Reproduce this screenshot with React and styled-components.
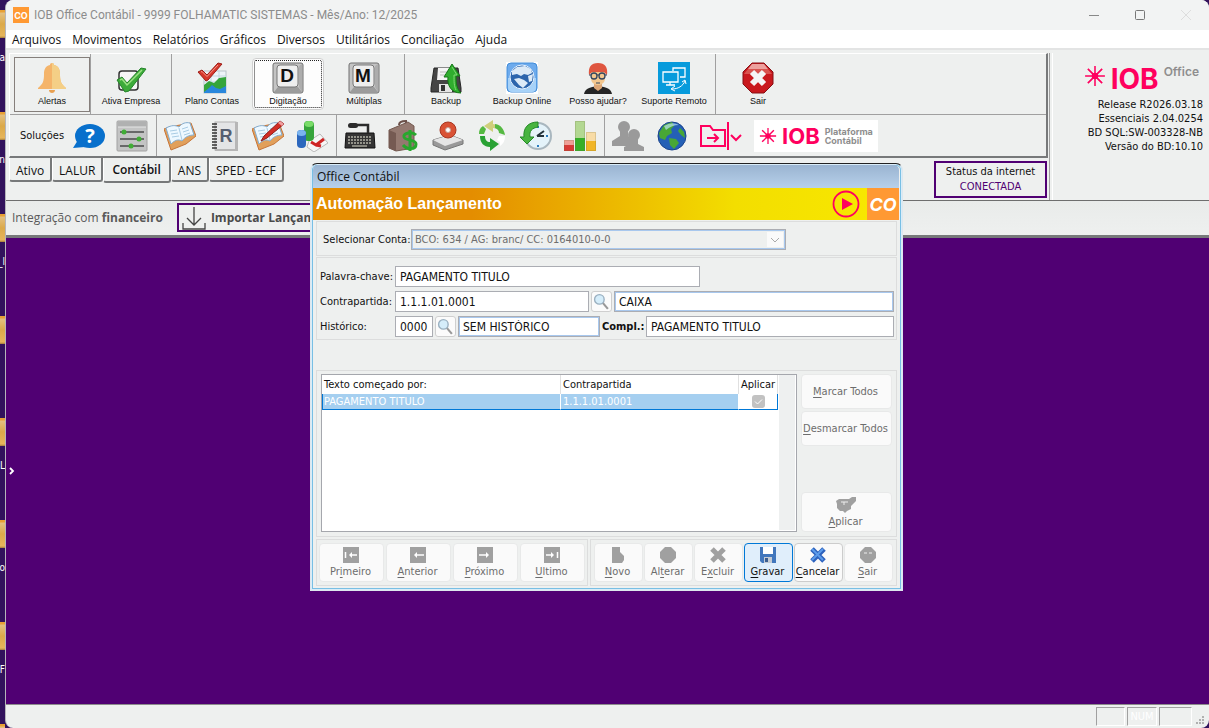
import React from 'react';
import styled, { createGlobalStyle } from 'styled-components';

const GlobalStyle = createGlobalStyle`
  * {
    box-sizing: border-box;
  }

  body {
    margin: 0;
    background: #32125c;
    font-family: 'DejaVu Sans Condensed', 'DejaVu Sans', sans-serif;
    font-size: 11px;
    color: #111;
  }

  button, input, select {
    font: inherit;
    color: inherit;
    margin: 0;
  }

  svg {
    display: block;
    flex: none;
  }
`;

// Desktop behind the window
const Desktop = styled.div`
  display: grid;
  grid-template-columns: 5px minmax(0, 1fr);
  height: 100vh;
  overflow: hidden;
`;

const DesktopIcons = styled.div`
  padding-top: 10px;
  overflow: hidden;
`;

const DesktopIcon = styled.div`
  height: 102px;
  color: white;

  &::before {
    content: '';
    display: block;
    height: 28px;
    background: linear-gradient(#e8a035 2px, #e3bf80 3px, #dba94a 14px, #e6b55c 26px, #a37a3c);
  }
`;

const DesktopLabel = styled.div`
  display: flex;
  justify-content: flex-end;
  margin-top: 13px;
  font-size: 10px;
  line-height: 14px;
`;

const Window = styled.div`
  position: relative;
  display: flex;
  flex-direction: column;
  min-height: 0;
  background: #eef0ef;
  border-left: 1px solid #b5b5ba;
  border-radius: 8px;
  overflow: hidden;
`;

const TitleBar = styled.header`
  display: flex;
  align-items: center;
  gap: 5px;
  height: 30px;
  flex: none;
  padding: 0 15px 0 7px;
  background: #f2f3f3;
  color: #8c8c8c;
  font-family: Roboto, sans-serif;
  font-size: 12px;
`;

const CoBadge = styled.span`
  display: flex;
  align-items: center;
  justify-content: center;
  width: ${(p) => p.$size}px;
  height: ${(p) => p.$size}px;
  background: #ff9933;
  color: white;
  font-family: Inter, sans-serif;
  font-weight: 700;
  font-style: ${(p) => (p.$italic ? 'italic' : 'normal')};
  font-size: ${(p) => p.$font}px;
`;

const WindowButtons = styled.div`
  display: flex;
  gap: 30px;
  margin-left: auto;
`;

const WindowButton = styled.button`
  padding: 0;
  border: none;
  background: none;
  width: 16px;
  height: 16px;
`;

const MenuBar = styled.nav`
  display: flex;
  align-items: center;
  gap: 11px;
  height: 20px;
  flex: none;
  padding: 1px 6px 0;
  background: white;
  border-bottom: 2px solid #e3e4e4;
`;

const MenuItem = styled.a`
  color: #111;
  text-decoration: none;
  font-family: 'Open Sans', sans-serif;
  font-size: 12px;
  line-height: 16px;
`;

const TopArea = styled.div`
  display: grid;
  grid-template-columns: minmax(0, 1fr) 159px;
  height: 151px;
  flex: none;
  padding-top: 3px;
  border-bottom: 1px solid #6e6e6e;
`;

const Toolbars = styled.div`
  display: flex;
  flex-direction: column;
  padding: 0 1px 0 3px;
  border-right: 1px solid #a0a0a0;
`;

const ToolFrame = styled.div`
  border-top: 1px solid white;
  border-left: 1px solid white;
  border-right: 2px solid #77797a;
  border-bottom: 2px solid #77797a;
`;

const ToolRow = styled.div`
  display: flex;
  height: 61px;
  border-bottom: 1px solid #a0a0a0;
`;

const ToolGroup = styled.div`
  display: flex;
  align-items: center;
  padding: 0 ${(p) => (p.$flush ? 0 : p.$pad || 2)}px 0 ${(p) => p.$pad || 2}px;
  border-right: 1px solid ${(p) => (p.$last ? 'transparent' : '#a0a0a0')};
`;

const ToolButton = styled.button`
  display: flex;
  flex-direction: column;
  align-items: center;
  justify-content: flex-end;
  gap: 1px;
  width: 76px;
  height: 55px;
  padding: 0 0 4px;
  border: 1px solid ${(p) => (p.$framed ? '#857f7b' : 'transparent')};
  background: none;
  font-family: 'Liberation Sans', sans-serif;
  font-size: 9px;
  line-height: 12px;
  white-space: nowrap;
`;

const FocusedToolButton = styled(ToolButton)`
  width: 72px;
  height: 52px;
  margin: 0 2px;
  border: 1px solid #d0d0d0;
  border-radius: 4px;
  background: #fdfdfd;
  outline: 1px dotted #222;
  outline-offset: -3px;
  padding-bottom: 2px;
`;

const IconRow = styled.div`
  display: flex;
  align-items: center;
  height: 41px;
`;

const IconGroup = styled.div`
  display: flex;
  align-items: center;
  gap: ${(p) => p.$gap || 12}px;
  height: 100%;
  padding: 0 8px 0 7px;
  border-right: 1px solid ${(p) => (p.$last ? 'transparent' : '#a0a0a0')};
`;

const SolutionsLabel = styled.span`
  width: 42px;
  margin-left: 3px;
`;

const IconButton = styled.button`
  display: flex;
  padding: 0;
  border: none;
  background: none;
`;

const PlatformLogo = styled.a`
  display: flex;
  align-items: center;
  gap: 5px;
  height: 32px;
  padding: 0 5px;
  background: white;
  color: #8e8e8e;
  text-decoration: none;
  font-family: Inter, sans-serif;
  font-size: 9px;
  font-weight: 700;
  line-height: 9px;
`;

const Brand = styled.strong`
  color: #ff005e;
  font-family: Inter, sans-serif;
  font-weight: 700;
  font-size: ${(p) => p.$size}px;
  line-height: 1;
`;

const TabsLine = styled.div`
  display: flex;
  justify-content: space-between;
  padding-right: 1px;
`;

const Tabs = styled.div`
  display: flex;
  align-items: flex-start;
`;

const Tab = styled.button`
  height: ${(p) => (p.$active ? 25 : 24)}px;
  padding: ${(p) => (p.$active ? '0 8px' : '4px 6px 0')};
  border: 1px solid #77797a;
  border-width: 0 2px 2px 1px;
  border-left-color: white;
  border-radius: 0 0 3px 3px;
  background: #eef0ef;
  font-family: 'Open Sans', sans-serif;
  font-size: 12px;
  font-weight: ${(p) => (p.$active ? 600 : 400)};
  line-height: 18px;
`;

const InternetStatus = styled.div`
  width: 113px;
  height: 37px;
  margin-top: 3px;
  border: 2px solid #500073;
  text-align: center;
  line-height: 15px;
  padding-top: 1px;
`;

const Connected = styled.div`
  color: #500073;
`;

const ReleasePanel = styled.aside`
  margin-left: 2px;
  border-left: 1px solid white;
  padding: 12px 6px 0 0;
  text-align: right;
  line-height: 14px;
  white-space: nowrap;
`;

const OfficeLogo = styled.div`
  display: flex;
  align-items: flex-start;
  justify-content: flex-end;
  gap: 5px;
  height: 33px;
  padding-right: 4px;
  color: #8e8e8e;
  font-family: Inter, sans-serif;
  font-size: 12px;
  font-weight: 600;
  line-height: 14px;
`;

const IntegrationBar = styled.div`
  display: flex;
  align-items: center;
  gap: 14px;
  height: 37px;
  flex: none;
  padding: 0 6px 1px;
  border-bottom: 3px solid #77797a;
  background: linear-gradient(#e9ebea, #eef0ef);
  color: #5a5a5a;
  font-family: 'Open Sans', sans-serif;
  font-size: 12px;
`;

const ImportButton = styled.button`
  display: flex;
  align-items: center;
  gap: 4px;
  width: 190px;
  height: 29px;
  padding: 0 2px;
  border: 2px solid #500073;
  background: #eef0ef;
  color: #4a4a4a;
  font-weight: 700;
  white-space: nowrap;
`;

const Workspace = styled.main`
  flex: 1;
  display: flex;
  align-items: center;
  padding-left: 2px;
  background: #500073;
`;

const StatusBar = styled.footer`
  display: flex;
  justify-content: flex-end;
  gap: 2px;
  height: 24px;
  flex: none;
  padding: 2px 3px 2px 0;
  border-top: 1px solid #8c8c8c;
`;

const StatusCell = styled.div`
  width: ${(p) => p.$width}px;
  border: 1px solid #a0a0a0;
  border-right-color: white;
  border-bottom-color: white;
  color: white;
  line-height: 18px;
  text-align: center;
`;

const ResizeGrip = styled.span`
  align-self: flex-end;
`;

// Dialog
const Dialog = styled.section`
  position: absolute;
  left: 304px;
  top: 163px;
  width: 593px;
  border: 1px solid #dde7ee;
  border-top-color: #222;
  border-radius: 7px 7px 0 0;
  background: #eef0ef;
  box-shadow: inset 0 0 0 1px #d9ecf8, inset 0 0 0 2px #78bfe4;
  padding: 1px 3px 4px 2px;
`;

const DialogTitle = styled.div`
  height: 23px;
  padding: 0 4px;
  border-radius: 5px 5px 0 0;
  background: linear-gradient(#9ab4d1, #b7d0ea);
  font-family: 'Open Sans', sans-serif;
  font-size: 12px;
  line-height: 24px;
`;

const DialogHeader = styled.div`
  display: flex;
  align-items: center;
  height: 32px;
  padding-left: 3px;
  background: linear-gradient(90deg, #e48d00 0%, #e48d00 27%, #f3de00 72%, #f8e900 100%);
`;

const DialogHeading = styled.h1`
  flex: 1;
  margin: 0;
  color: white;
  font-family: 'Liberation Sans', sans-serif;
  font-size: 16px;
  font-weight: 700;
`;

const PlayButton = styled(IconButton)`
  margin-right: 7px;
`;

const DialogBody = styled.div`
  display: flex;
  flex-direction: column;
  gap: 1px;
  padding: 1px 2px 0 3px;
`;

const Panel = styled.div`
  display: flex;
  border: 1px solid #dcdddd;
  padding: ${(p) => p.$padding || '0'};
  gap: ${(p) => p.$gap || 0}px;
`;

const FormGrid = styled(Panel)`
  flex-direction: column;
  gap: 4px;
  padding: 8px 2px 2px 3px;
`;

const FieldRow = styled.div`
  display: flex;
  align-items: center;
  gap: 2px;
`;

const FieldLabel = styled.label`
  width: ${(p) => p.$width || 73}px;
  flex: none;
  white-space: nowrap;
  font-weight: ${(p) => (p.$bold ? 700 : 400)};
`;

const TextField = styled.input`
  width: ${(p) => (p.$width ? `${p.$width}px` : 'auto')};
  flex: ${(p) => (p.$width ? 'none' : '1')};
  min-width: 0;
  height: 21px;
  padding: 0 4px;
  border: 1px solid #abadb3;
  background: white;
  font-size: 12px;
  box-shadow: ${(p) => (p.$framed ? 'inset 0 0 0 1px #a8c8ee' : 'none')};
`;

const SelectWrap = styled.div`
  position: relative;
  width: 375px;
`;

const AccountSelect = styled.select`
  appearance: none;
  width: 100%;
  height: 21px;
  padding: 0 3px;
  border: 1px solid #abadb3;
  border-radius: 0;
  box-shadow: inset 0 0 0 1px #a8c8ee;
  background: #eef0ef;
  color: #6d6d6d;
  opacity: 1;
`;

const SelectArrow = styled.span`
  position: absolute;
  right: 3px;
  top: 3px;
  padding: 4px 2px;
  height: 15px;
  background: #fafafa;
  pointer-events: none;
`;

const SearchButton = styled.button`
  display: flex;
  align-items: center;
  justify-content: center;
  width: 21px;
  height: 21px;
  padding: 0;
  border: 1px solid #cfcfcf;
  border-radius: 3px;
  background: #fbfbfb;
`;

const Spacer = styled.div`
  height: 28px;
`;

const GridBox = styled.div`
  flex: 1;
  display: flex;
  justify-content: space-between;
  height: 158px;
  padding: 0 1px 1px 0;
  border: 1px solid #a5a7ad;
  background: white;
`;

const GridTable = styled.table`
  width: 456px;
  height: 35px;
  border-collapse: separate;
  border-spacing: 0;
  table-layout: fixed;

  th {
    height: 19px;
    padding: 0 2px;
    border-right: 1px solid #e0e0e0;
    font-weight: 400;
    text-align: left;
    line-height: 16px;
  }

  td {
    height: 16px;
    padding: 0 2px;
    border-right: 1px solid white;
    border-bottom: 1px solid #0078d7;
    background: #a5cff0;
    color: white;
    line-height: 14px;
  }

  td:first-child {
    border-left: 1px solid #0078d7;
    padding-left: 1px;
  }

  td:last-child {
    border-right-color: #0078d7;
    background: white;
    text-align: center;
  }
`;

const Check = styled.input`
  appearance: none;
  display: block;
  width: 13px;
  height: 13px;
  margin: 0 auto;
  border-radius: 3px;
  background: #c2c2c2 url("data:image/svg+xml,%3Csvg xmlns='http://www.w3.org/2000/svg' viewBox='0 0 13 13'%3E%3Cpath d='M3 6.5l2.5 2.5L10 4.500' fill='none' stroke='white'/%3E%3C/svg%3E");
`;

const ScrollTrack = styled.div`
  width: 16px;
  background: #eef0f0;
`;

const SideButtons = styled.div`
  display: flex;
  flex-direction: column;
  gap: 2px;
  width: 91px;
`;

const DialogButton = styled.button`
  display: flex;
  flex-direction: column;
  align-items: center;
  justify-content: center;
  gap: 2px;
  width: ${(p) => p.$width}px;
  height: ${(p) => p.$height || 39}px;
  padding: 1px 2px 0 0;
  border: 1px solid ${(p) => (p.$variant === 'default' ? '#0078d7' : p.$variant ? '#cccccc' : '#e8e9e9')};
  border-radius: 4px;
  background: ${(p) => (p.$variant === 'default' ? '#e0eefb' : '#fafafa')};
  color: ${(p) => (p.$variant ? '#111' : '#6d6d6d')};
  line-height: 14px;
  white-space: nowrap;

  u {
    text-underline-offset: 2px;
  }
`;

const PushDown = styled.div`
  margin-top: auto;
`;

const ButtonPanels = styled.div`
  display: flex;
  gap: 2px;
  margin-top: 1px;
`;

const NavPanel = styled(Panel)`
  width: 272px;
  padding: 3px 2px;
  gap: 2px;
`;

const ActionPanel = styled(Panel)`
  flex: 1;
  padding: 3px;
  gap: 1px;
`;

// Icons
const Svg = ({ size = 32, w, h, box, children }) => (
  <svg width={w || size} height={h || size} viewBox={box || '0 0 32 32'} fill="none" aria-hidden="true">
    {children}
  </svg>
);

const Star = ({ size }) => (
  <Svg size={size} box="0 0 20 20">
    <path d="M10 1v18M1 10h18" stroke="#ff005e" strokeWidth="1.400" />
    <path d="M3.500 3.500l13 13M16.500 3.500l-13 13" stroke="#ff005e" strokeWidth="1.600" />
    <circle cx="10" cy="10" r="3" fill="#ff005e" />
  </Svg>
);

const BellIcon = () => (
  <Svg>
    <path d="M16 1c1.300 0 2 .8 2 2 5 1 6 5 6 9 0 7 1 10 6 14v1H2v-1c5-4 6-7 6-14 0-4 1-8 6-9 0-1.200.7-2 2-2z" fill="#f4b46a" />
    <path d="M16 1c1.300 0 2 .8 2 2 5 1 6 5 6 9 0 7 1 10 6 14v1H16z" fill="#f4cf86" />
    <path d="M13 28h6c0 4-6 4-6 0z" fill="#e8a050" />
  </Svg>
);

const CheckIcon = () => (
  <Svg>
    <rect x="4" y="9" width="19" height="19" rx="3" fill="#f6f6f6" stroke="#333" strokeWidth="1.500" />
    <path d="M2 18l5-3 5 6L26 6l5 1-17 22-4 1z" fill="#3dab3a" stroke="#24842a" />
    <path d="M5 18l2-1 5 6L27 8" stroke="#9be083" strokeWidth="1.500" />
  </Svg>
);

const PlanIcon = () => (
  <Svg>
    <rect x="8" y="9" width="22" height="22" fill="#eef4f8" stroke="#b8c4ca" />
    <path d="M8 14h22M8 20h22M15 9v22M23 9v22" stroke="#c3d8e2" />
    <path d="M8 23l5-4 5 2 5-5 7-1v16H8z" fill="#35a53b" />
    <path d="M8 30l5-4 3-3 4 3 4 1 6-3v7H8z" fill="#2987dc" />
    <path d="M2 10l4-2 5 5L22 1l4 1-14 16-2 1z" fill="#d7382c" stroke="#9c1d17" />
    <path d="M5 10l1-.500 5 5L22 3" stroke="#f69a8d" />
  </Svg>
);

const KeyIcon = ({ letter }) => (
  <Svg>
    <rect x="1" y="1" width="30" height="30" rx="2" fill="#c4c4c4" stroke="#707070" />
    <path d="M2 30l4-5h20l4 5z" fill="#9c9c9c" />
    <path d="M30 2l-3 2v21l3 5z" fill="#adadad" />
    <rect x="5" y="3" width="21" height="22" rx="3" fill="#eee" stroke="#777" />
    <text x="15" y="20" textAnchor="middle" fontFamily="Liberation Sans, sans-serif" fontWeight="700" fontSize="19" fill="#111">{letter}</text>
  </Svg>
);

const BackupIcon = () => (
  <Svg>
    <path d="M4 6h24l3 20v4H1v-4z" fill="#454545" stroke="#262626" />
    <path d="M8 6h15v12H7z" fill="#f4f4f4" />
    <path d="M10 10h11M10 13h10" stroke="#bbb" />
    <path d="M9 22h13v8H9z" fill="#e4e4e4" />
    <path d="M11 23h4v6h-4z" fill="#333" />
    <path d="M22 2l8 12h-4c0 8 1 13 5 17-10 0-14-8-13-16h-4z" fill="#30ad2e" stroke="#147716" />
    <path d="M22 5l5 8h-3c0 7 0 11 2 15" stroke="#7fd873" />
  </Svg>
);

const OnlineIcon = () => (
  <Svg>
    <rect width="32" height="32" fill="#fff" />
    <rect x="1" y="1" width="30" height="29" rx="4" fill="#6dabed" stroke="#408cd8" />
    <path d="M2 16h28v10q0 4-4 4H6q-4 0-4-4z" fill="#a7d2f8" />
    <circle cx="16" cy="15" r="12" fill="#2c65ad" stroke="#e5f2ff" />
    <path d="M6 9l5-4 8-1 6 3 1 4-4 2-4-1-3 2-4-2-5 1zM8 17l5-1 5 2 4 3-3 3-2 2-4-3zM22 14l5-2-1 7-3 1z" fill="#dceaf7" />
  </Svg>
);

const PersonIcon = () => (
  <Svg>
    <path d="M2 32c1-5 5-7 14-8 9 1 13 3 14 8z" fill="#252525" />
    <path d="M12 20h8v6l-4 3-4-3z" fill="#dda777" />
    <path d="M9 9h14v8c-1 8-13 8-14 0z" fill="#f3c78f" />
    <path d="M7 13C6 5 9 1 16 1s10 4 9 12l-3-3H10z" fill="#df5640" />
    <circle cx="12" cy="14" r="3" stroke="#34465e" strokeWidth="1.300" />
    <circle cx="20" cy="14" r="3" stroke="#34465e" strokeWidth="1.300" />
    <path d="M7 13h2m6 0h2m6 0h2M14 21h4" stroke="#34465e" />
  </Svg>
);

const RemoteIcon = () => (
  <Svg>
    <path d="M0 0h32v32H0z" fill="#079bdc" />
    <path d="M15 9V6h12v9h-5M5 10h15v10H5zM12 20v3m-4 0h9" stroke="#fff" strokeWidth="1.300" />
    <path d="M14 27c6 0 11-3 13-8m-3 1l3-2 1 4M17 24l-4 3 4 2" stroke="#fff" />
  </Svg>
);

const StopIcon = () => (
  <Svg>
    <path d="M10 1h12l9 9v12l-9 9H10l-9-9V10z" fill="#c9191e" stroke="#861015" />
    <path d="M10 2h12l4 5H6z" fill="#eda19e" />
    <path d="M6 7h20l4 5H2z" fill="#d9534f" />
    <path d="M10 10l12 12M22 10L10 22" stroke="#f5f5f5" strokeWidth="6" />
  </Svg>
);

const HelpIcon = () => (
  <Svg>
    <ellipse cx="17" cy="16" rx="15" ry="12" fill="#0870cc" />
    <path d="M5 20L0 28l12-1z" fill="#0870cc" />
    <text x="17" y="23" textAnchor="middle" fontFamily="Open Sans, sans-serif" fontWeight="700" fontSize="20" fill="#fff">?</text>
  </Svg>
);

const SlidersIcon = () => (
  <Svg>
    <rect x="1" y="1" width="30" height="30" rx="1" fill="#c3c4c4" stroke="#a2a2a2" />
    <path d="M2 2h28v5H2z" fill="#b0b1b1" />
    <path d="M2 7h28" stroke="#e5e5e5" />
    <path d="M4 12h24M4 19h24M4 26h24" stroke="#4b4b4b" strokeWidth="1.500" />
    <circle cx="8" cy="12" r="2.500" fill="#40ad35" />
    <circle cx="23" cy="19" r="2.500" fill="#40ad35" />
    <circle cx="15" cy="26" r="2.500" fill="#40ad35" />
  </Svg>
);

const BookIcon = ({ pen }) => (
  <Svg>
    <path d="M0 9l5-2 22-4 5 13-10 8-15 6z" fill="#e1a05b" stroke="#c5763a" />
    <path d="M2 8c6-3 9-3 13-1 3-4 7-5 11-4l4 12c-5 0-9 2-12 6-4-2-7-1-11 3z" fill="#edf8ff" stroke="#83add0" />
    <path d="M15 8l3 12M6 11l7-1M7 14l7-1M8 17l7-1M18 9l6-2M19 12l6-2M20 15l6-2" stroke="#a9cce4" />
    {pen && (
      <>
        <path d="M9 21l3-5L28 1l4 3-17 14z" fill="#d22d26" stroke="#8e1d1b" />
        <path d="M26 3l2-2 4 3-2 2z" fill="#f0a0a0" />
      </>
    )}
  </Svg>
);

const NotebookIcon = () => (
  <Svg>
    <rect x="7" y="2" width="21" height="28" fill="#e4e5e6" stroke="#b2b2b2" />
    <path d="M27 2h3v29H7v-2h20z" fill="#b6b6b6" />
    <path d="M4 4h5M4 7h5M4 10h5M4 13h5M4 16h5M4 19h5M4 22h5M4 25h5M4 28h5" stroke="#333" strokeWidth="1.500" />
    <text x="18" y="22" textAnchor="middle" fontFamily="Liberation Sans, sans-serif" fontWeight="700" fontSize="18" fill="#565f70">R</text>
  </Svg>
);

const CubesIcon = () => (
  <Svg>
    <path d="M13 21l11-7 8 9-14 9-7-5z" fill="#f6f6f6" stroke="#b8b8b8" />
    <path d="M15 22l5 3 8-6M20 25l5 1" stroke="#ce2424" strokeWidth="3" />
    <rect x="8" y="1" width="10" height="20" rx="4" fill="#36a43b" />
    <ellipse cx="13" cy="4" rx="4.500" ry="3" fill="#79dc68" />
    <rect x="1" y="10" width="9" height="18" rx="4" fill="#2b67bd" />
    <ellipse cx="5.500" cy="13" rx="4.500" ry="3" fill="#7ab4ef" />
  </Svg>
);

const KeyboardIcon = () => (
  <Svg>
    <path d="M2 13h28l1 15H1z" fill="#343434" stroke="#111" />
    <path d="M4 17h24M4 20h24M4 23h24" stroke="#b3b3a6" strokeWidth="1.300" strokeDasharray="2 1" />
    <path d="M8 26h15" stroke="#b3b3a6" strokeWidth="1.300" />
    <path d="M24 13V5H12" stroke="#2c2c2c" strokeWidth="2.500" />
    <rect x="4" y="3" width="10" height="5" rx="2.500" fill="#2b2b2b" />
  </Svg>
);

const MoneyIcon = () => (
  <Svg>
    <path d="M11 5q0-4 7-4v4" stroke="#6b5049" strokeWidth="2" />
    <path d="M1 10L20 2l6 4v22l-18 3-7-3z" fill="#947970" stroke="#74594f" />
    <path d="M1 10l7 3v18l-7-3z" fill="#755a52" />
    <path d="M28 15c-4-4-13-2-12 2 1 4 12 2 12 7 0 6-9 6-13 1M22 10v21" stroke="#28a72d" strokeWidth="3" />
  </Svg>
);

const DiskIcon = () => (
  <Svg>
    <path d="M1 20l17-5 13 5v4l-18 6-12-5z" fill="#999" stroke="#777" />
    <path d="M1 20l17-5 13 5-18 6z" fill="#e5e5e5" />
    <circle cx="16" cy="10" r="8" fill="#d95235" stroke="#a83621" />
    <circle cx="16" cy="10" r="2.500" fill="#fff" stroke="#c6a096" />
  </Svg>
);

const RefreshIcon = () => (
  <Svg>
    <path d="M17 0L8 6l9 6V8l5 1 1-4-6-1z" fill="#cfcf7b" />
    <path d="M19 4c6 1 9 5 10 11l-6-2c0-3-2-4-4-5z" fill="#55b942" />
    <path d="M4 16c0 7 4 11 10 11v4l9-7-9-6v4c-3 0-5-2-5-6z" fill="#29a234" />
    <path d="M23 16h6c0 5-2 8-5 10v-4l-3-2z" fill="#fff" />
    <path d="M3 14c0-4 1-6 4-8l3 3-2 5z" fill="#55b942" />
  </Svg>
);

const ClockIcon = () => (
  <Svg>
    <circle cx="18" cy="16" r="13" fill="#e4f3fa" stroke="#a9b7bf" strokeWidth="2" />
    <path d="M17 16l7-5M17 16h7" stroke="#23333b" strokeWidth="2" />
    <path d="M18 6v2m0 17v2m8-11h2" stroke="#2b7dc0" strokeWidth="2" />
    <path d="M18 2C8 2 3 8 4 17H0l7 7 7-7h-4c-1-6 2-9 8-10z" fill="#48b43f" stroke="#258b28" />
  </Svg>
);

const BarsIcon = () => (
  <Svg>
    <path d="M0 20h10v11H0z" fill="#d73935" />
    <path d="M0 20h10v5H0z" fill="#ef9f96" />
    <path d="M11 1h10v30H11z" fill="#36af28" />
    <path d="M11 1h10v17H11z" fill="#b3d892" />
    <path d="M22 12h10v19H22z" fill="#f1b526" />
    <path d="M22 12h10v9H22z" fill="#f8dca6" />
    <path d="M.500 20.500h9v10h-9zM11.500 1.500h9v29h-9zM22.500 12.500h9v18h-9z" stroke="#6a6a3a" strokeOpacity=".2" />
  </Svg>
);

const PeopleIcon = () => (
  <Svg>
    <circle cx="12" cy="7" r="6" fill="#9a9a9a" />
    <path d="M8 11h8v5l5 3v7H0v-5l8-5z" fill="#9a9a9a" />
    <circle cx="22" cy="15" r="6" fill="#9a9a9a" />
    <path d="M18 19h8v5l6 3v4H12v-4l6-3z" fill="#9a9a9a" />
  </Svg>
);

const GlobeIcon = () => (
  <Svg>
    <circle cx="16" cy="16" r="14" fill="#2460b6" stroke="#1a438c" />
    <path d="M3 13L8 5l8-3 2 4-3 3 1 4-5 3-2 4-5-2zM13 18l7 1 3 4-5 6-4-4zM24 8l4 4 1 6-4-3-3-4z" fill="#48a735" />
    <path d="M8 6q8-5 15-1-7 0-13 5z" fill="#bce2f4" opacity=".7" />
  </Svg>
);

const FolderIcon = () => (
  <Svg w={42} h={30} box="0 0 42 30">
    <path d="M1 5h9l3 4h12v16H1zM7 17h11m-4-4l4 4-4 4M28 1v28" stroke="#ff005e" strokeWidth="2" />
    <path d="M31 14l5 5 5-5" stroke="#ff005e" strokeWidth="2" />
  </Svg>
);

const SearchIcon = () => (
  <Svg size={17} box="0 0 16 16">
    <path d="M9 9l5 6" stroke="#999" strokeWidth="2" />
    <circle cx="6" cy="6" r="4.500" fill="#d5edfa" stroke="#9ab0c0" strokeWidth="1.300" />
  </Svg>
);

const ArrowIcon = ({ right, end }) => (
  <Svg size={16} box="0 0 16 16">
    <path d="M0 0h16v16H0z" fill="#a0a0a0" />
    <g transform={right ? 'matrix(-1 0 0 1 16 0)' : undefined}>
      <path d={end ? 'M8 8h6M2.500 5v6' : 'M5 8h9'} stroke="#fff" strokeWidth="1.500" />
      <path d={end ? 'M6 8l3-3v6z' : 'M4 8l3-3v6z'} fill="#fff" />
    </g>
  </Svg>
);

const actionDrawings = {
  novo: <path d="M2 0h8v5l4 4v4l-2 3H2z" fill="#a0a0a0" />,
  alterar: <path d="M5 0h6l5 5v6l-5 5H5l-5-5V5z" fill="#a0a0a0" />,
  excluir: <path d="M2 2l12 12M14 2L2 14" stroke="#a0a0a0" strokeWidth="5" />,
  gravar: (
    <>
      <path d="M0 0h16v16H2l-2-2z" fill="#4277bd" />
      <path d="M3 0h10v7H3z" fill="#fff" />
      <path d="M4 10h8v6H4z" fill="#c5ccd5" />
      <path d="M5 11h3v4H5z" fill="#3b5d8f" />
    </>
  ),
  cancelar: (
    <>
      <path d="M2 2l12 12M14 2L2 14" stroke="#2d62bd" strokeWidth="5" />
      <path d="M2 2l11 11M13 2L2 13" stroke="#5b9bea" strokeWidth="2" />
    </>
  ),
  sair: (
    <>
      <path d="M5 0h6l5 5v6l-5 5H5l-5-5V5z" fill="#a0a0a0" />
      <path d="M4 6h3m2 0h3" stroke="#eee" />
    </>
  ),
  aplicar: (
    <>
      <path d="M0 4l3-2h10l3-2h4v4l-5 5v3l-4 2-2 2-2-2H4l-3-3V7z" fill="#a0a0a0" />
      <path d="M5 5h7M8 5v3" stroke="#eee" />
    </>
  ),
};

const ActionIcon = ({ name }) => (
  <Svg w={name === 'aplicar' ? 20 : 16} h={16} box={name === 'aplicar' ? '0 0 20 16' : '0 0 16 16'}>
    {actionDrawings[name]}
  </Svg>
);

const menus = ['Arquivos', 'Movimentos', 'Relatórios', 'Gráficos', 'Diversos', 'Utilitários', 'Conciliação', 'Ajuda'];
const desktopLabels = ['a', 'n', '_l', '', 'L', 'o', 'F', ''];

const actions = [
  { icon: 'novo', text: <><u>N</u>ovo</> },
  { icon: 'alterar', text: <>Al<u>t</u>erar</> },
  { icon: 'excluir', text: <>E<u>x</u>cluir</> },
  { icon: 'gravar', text: <><u>G</u>ravar</>, variant: 'default' },
  { icon: 'cancelar', text: <><u>C</u>ancelar</>, variant: 'enabled' },
  { icon: 'sair', text: <><u>S</u>air</> },
];

const AutomationDialog = () => (
  <Dialog role="dialog" aria-labelledby="dialog-heading">
    <DialogTitle>Office Contábil</DialogTitle>
    <DialogHeader>
      <DialogHeading id="dialog-heading">Automação Lançamento</DialogHeading>
      <PlayButton aria-label="Vídeo">
        <Svg size={28} box="0 0 28 28">
          <circle cx="14" cy="14" r="12.500" stroke="#ff005e" strokeWidth="1.800" />
          <path d="M10 8l11 6-11 6z" fill="#ff005e" />
        </Svg>
      </PlayButton>
      <CoBadge $size={32} $font={18} $italic>CO</CoBadge>
    </DialogHeader>
    <DialogBody>
      <Panel $padding="7px 6px 5px" $gap={2}>
        <FieldRow>
          <FieldLabel htmlFor="conta" $width={86}>Selecionar Conta:</FieldLabel>
          <SelectWrap>
            <AccountSelect id="conta" disabled>
              <option>BCO: 634 / AG: branc/ CC: 0164010-0-0</option>
            </AccountSelect>
            <SelectArrow>
              <Svg w={12} h={8} box="0 0 12 8"><path d="M2 2l4 4 4-4" stroke="#aaa" /></Svg>
            </SelectArrow>
          </SelectWrap>
        </FieldRow>
      </Panel>
      <FormGrid>
        <FieldRow>
          <FieldLabel htmlFor="palavra">Palavra-chave:</FieldLabel>
          <TextField id="palavra" $width={305} defaultValue="PAGAMENTO TITULO" />
        </FieldRow>
        <FieldRow>
          <FieldLabel htmlFor="contrapartida">Contrapartida:</FieldLabel>
          <TextField id="contrapartida" $width={194} defaultValue="1.1.1.01.0001" />
          <SearchButton aria-label="Pesquisar contrapartida"><SearchIcon /></SearchButton>
          <TextField aria-label="Nome da contrapartida" $framed readOnly value="CAIXA" />
        </FieldRow>
        <FieldRow>
          <FieldLabel htmlFor="historico">Histórico:</FieldLabel>
          <TextField id="historico" $width={38} defaultValue="0000" />
          <SearchButton aria-label="Pesquisar histórico"><SearchIcon /></SearchButton>
          <TextField aria-label="Nome do histórico" $width={142} $framed readOnly value="SEM HISTÓRICO" />
          <FieldLabel htmlFor="compl" $width={42} $bold>Compl.:</FieldLabel>
          <TextField id="compl" defaultValue="PAGAMENTO TITULO" />
        </FieldRow>
      </FormGrid>
      <Spacer />
      <Panel $padding="3px 4px 4px" $gap={4}>
        <GridBox>
          <GridTable>
            <colgroup>
              <col width="239" />
              <col width="178" />
              <col width="39" />
            </colgroup>
            <thead>
              <tr><th>Texto começado por:</th><th>Contrapartida</th><th>Aplicar</th></tr>
            </thead>
            <tbody>
              <tr>
                <td>PAGAMENTO TITULO</td>
                <td>1.1.1.01.0001</td>
                <td><Check type="checkbox" aria-label="Aplicar" defaultChecked disabled /></td>
              </tr>
            </tbody>
          </GridTable>
          <ScrollTrack />
        </GridBox>
        <SideButtons>
          <DialogButton $width={91} $height={35} disabled><span><u>M</u>arcar Todos</span></DialogButton>
          <DialogButton $width={91} $height={35} disabled><span><u>D</u>esmarcar Todos</span></DialogButton>
          <PushDown>
            <DialogButton $width={91} $height={40} disabled>
              <ActionIcon name="aplicar" />
              <span><u>A</u>plicar</span>
            </DialogButton>
          </PushDown>
        </SideButtons>
      </Panel>
      <ButtonPanels>
        <NavPanel>
          <DialogButton $width={65} disabled><ArrowIcon end /><span>Pr<u>i</u>meiro</span></DialogButton>
          <DialogButton $width={65} disabled><ArrowIcon /><span><u>A</u>nterior</span></DialogButton>
          <DialogButton $width={65} disabled><ArrowIcon right /><span><u>P</u>róximo</span></DialogButton>
          <DialogButton $width={65} disabled><ArrowIcon right end /><span><u>U</u>ltimo</span></DialogButton>
        </NavPanel>
        <ActionPanel>
          {actions.map((a) => (
            <DialogButton key={a.icon} $width={49} $variant={a.variant} disabled={!a.variant}>
              <ActionIcon name={a.icon} />
              <span>{a.text}</span>
            </DialogButton>
          ))}
        </ActionPanel>
      </ButtonPanels>
    </DialogBody>
  </Dialog>
);

const App = () => {
  return (
    <>
      <GlobalStyle />
      <Desktop>
        <DesktopIcons>
          {desktopLabels.map((label, i) => (
            <DesktopIcon key={i}><DesktopLabel>{label}</DesktopLabel></DesktopIcon>
          ))}
        </DesktopIcons>
        <Window>
          <TitleBar>
            <CoBadge $size={16} $font={9}>CO</CoBadge>
            <span>IOB Office Contábil - 9999 FOLHAMATIC SISTEMAS - Mês/Ano: 12/2025</span>
            <WindowButtons>
              <WindowButton aria-label="Minimizar"><Svg size={16} box="0 0 16 16"><path d="M3 8.500h10" stroke="#888" /></Svg></WindowButton>
              <WindowButton aria-label="Maximizar"><Svg size={16} box="0 0 16 16"><rect x="3.500" y="3.500" width="9" height="9" rx="1" stroke="#777" /></Svg></WindowButton>
              <WindowButton aria-label="Fechar"><Svg size={16} box="0 0 16 16"><path d="M3 3l10 10M13 3L3 13" stroke="#ddd" /></Svg></WindowButton>
            </WindowButtons>
          </TitleBar>
          <MenuBar>
            {menus.map((m) => <MenuItem key={m} href="#">{m}</MenuItem>)}
          </MenuBar>
          <TopArea>
            <Toolbars>
              <ToolFrame>
                <ToolRow>
                  <ToolGroup $pad={4} $flush>
                    <ToolButton $framed><BellIcon />Alertas</ToolButton>
                  </ToolGroup>
                  <ToolGroup>
                    <ToolButton><CheckIcon />Ativa Empresa</ToolButton>
                  </ToolGroup>
                  <ToolGroup>
                    <ToolButton><PlanIcon />Plano Contas</ToolButton>
                    <FocusedToolButton><KeyIcon letter="D" />Digitação</FocusedToolButton>
                    <ToolButton><KeyIcon letter="M" />Múltiplas</ToolButton>
                  </ToolGroup>
                  <ToolGroup $pad={3}>
                    <ToolButton><BackupIcon />Backup</ToolButton>
                    <ToolButton><OnlineIcon />Backup Online</ToolButton>
                    <ToolButton><PersonIcon />Posso ajudar?</ToolButton>
                    <ToolButton><RemoteIcon />Suporte Remoto</ToolButton>
                  </ToolGroup>
                  <ToolGroup $pad={4} $last>
                    <ToolButton><StopIcon />Sair</ToolButton>
                  </ToolGroup>
                </ToolRow>
                <IconRow>
                  <IconGroup $gap={11}>
                    <SolutionsLabel>Soluções</SolutionsLabel>
                    <IconButton aria-label="Ajuda"><HelpIcon /></IconButton>
                    <IconButton aria-label="Parâmetros"><SlidersIcon /></IconButton>
                  </IconGroup>
                  <IconGroup>
                    <IconButton aria-label="Diário"><BookIcon /></IconButton>
                    <IconButton aria-label="Razão"><NotebookIcon /></IconButton>
                    <IconButton aria-label="Lançamentos"><BookIcon pen /></IconButton>
                    <IconButton aria-label="Balancete"><CubesIcon /></IconButton>
                  </IconGroup>
                  <IconGroup>
                    <IconButton aria-label="Teclado"><KeyboardIcon /></IconButton>
                    <IconButton aria-label="Financeiro"><MoneyIcon /></IconButton>
                    <IconButton aria-label="Disco"><DiskIcon /></IconButton>
                    <IconButton aria-label="Atualizar"><RefreshIcon /></IconButton>
                    <IconButton aria-label="Restaurar"><ClockIcon /></IconButton>
                    <IconButton aria-label="Indicadores"><BarsIcon /></IconButton>
                  </IconGroup>
                  <IconGroup $last>
                    <IconButton aria-label="Usuários"><PeopleIcon /></IconButton>
                    <IconButton aria-label="Internet"><GlobeIcon /></IconButton>
                    <IconButton aria-label="Pasta"><FolderIcon /></IconButton>
                    <PlatformLogo href="#">
                      <Star size={18} />
                      <Brand $size={22}>IOB</Brand>
                      <span>Plataforma<br />Contábil</span>
                    </PlatformLogo>
                  </IconGroup>
                </IconRow>
              </ToolFrame>
              <TabsLine>
                <Tabs>
                  <Tab>Ativo</Tab>
                  <Tab>LALUR</Tab>
                  <Tab $active>Contábil</Tab>
                  <Tab>ANS</Tab>
                  <Tab>SPED - ECF</Tab>
                </Tabs>
                <InternetStatus>
                  Status da internet
                  <Connected>CONECTADA</Connected>
                </InternetStatus>
              </TabsLine>
            </Toolbars>
            <ReleasePanel>
              <OfficeLogo>
                <Star size={22} />
                <Brand $size={28}>IOB</Brand>
                <span>Office</span>
              </OfficeLogo>
              <div>Release R2026.03.18</div>
              <div>Essenciais 2.04.0254</div>
              <div>BD SQL:SW-003328-NB</div>
              <div>Versão do BD:10.10</div>
            </ReleasePanel>
          </TopArea>
          <IntegrationBar>
            <span>Integração com <b>financeiro</b></span>
            <ImportButton>
              <Svg w={26} h={24} box="0 0 26 24">
                <path d="M13 1v17M6 12l7 7 7-7M2 17v6h22v-6" stroke="#444" strokeWidth="1.300" />
              </Svg>
              Importar Lançamentos
            </ImportButton>
          </IntegrationBar>
          <Workspace>
            <Svg w={8} h={10} box="0 0 8 10"><path d="M2 2l3 3-3 3" stroke="#fff" strokeWidth="1.800" /></Svg>
          </Workspace>
          <StatusBar>
            <StatusCell $width={29} />
            <StatusCell $width={30}>NUM</StatusCell>
            <StatusCell $width={33} />
            <ResizeGrip>
              <Svg size={12} box="0 0 12 12">
                <path d="M8 3h2M8 6h2M5 6h2M8 9h2M5 9h2M2 9h2" stroke="#b0b0b0" strokeWidth="2" />
              </Svg>
            </ResizeGrip>
          </StatusBar>
          <AutomationDialog />
        </Window>
      </Desktop>
    </>
  );
};

export default App;
